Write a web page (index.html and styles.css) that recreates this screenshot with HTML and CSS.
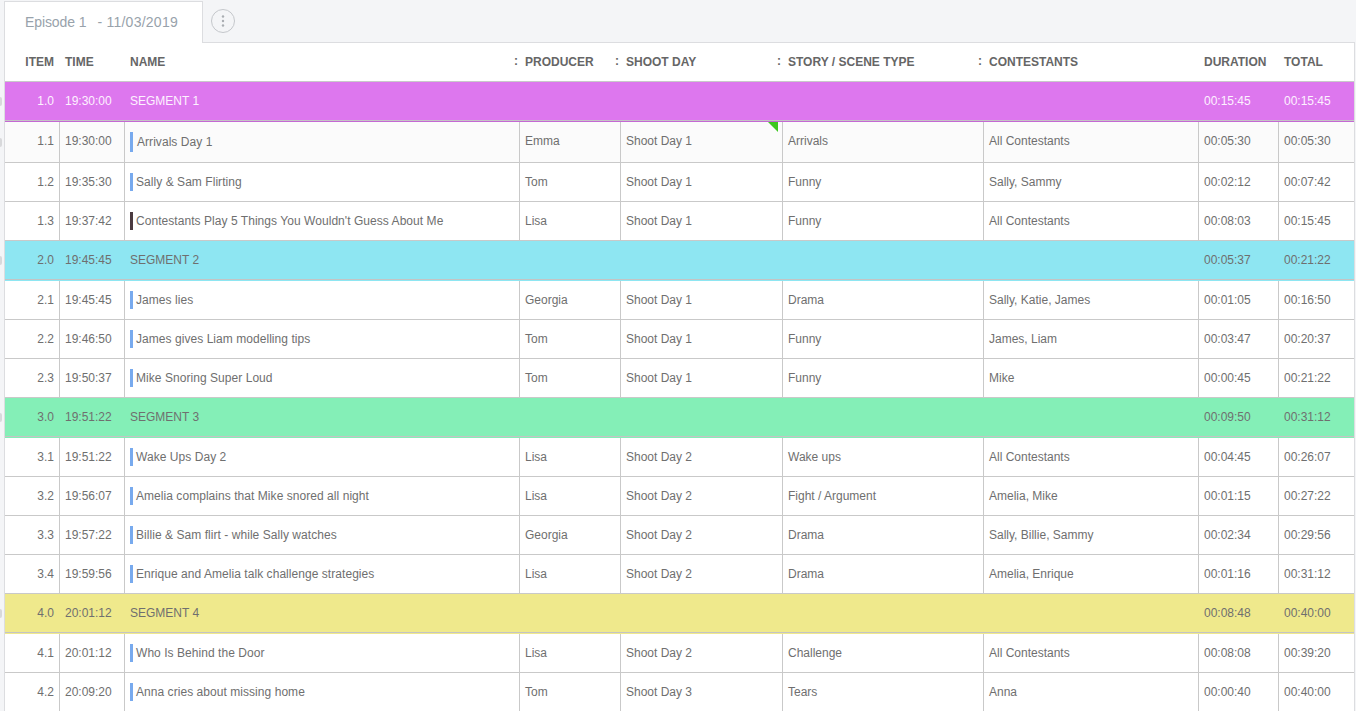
FILE: index.html
```html
<!DOCTYPE html>
<html lang="en">
<head>
<meta charset="utf-8">
<title>Episode 1 rundown</title>
<link rel="stylesheet" href="styles.css">
</head>
<body>
<div class="page">
  <div class="tabs">
    <div class="tab"><span class="ep">Episode 1</span><span class="date">- 11/03/2019</span></div>
    <button class="more" aria-label="More"><svg width="24" height="24" viewBox="0 0 24 24"><circle cx="12" cy="12" r="11.5" fill="none" stroke="#c4c7cb"/><circle cx="12" cy="7.5" r="1.2" fill="#a9adb2"/><circle cx="12" cy="12" r="1.2" fill="#a9adb2"/><circle cx="12" cy="16.5" r="1.2" fill="#a9adb2"/></svg></button>
  </div>
  <div class="sheet">
    <div class="row head">
      <div class="c item">ITEM</div><div class="c time">TIME</div>
      <div class="c name">NAME</div>
      <div class="c prod"><i class="grip">:</i>PRODUCER</div>
      <div class="c day"><i class="grip">:</i>SHOOT DAY</div>
      <div class="c story"><i class="grip">:</i>STORY / SCENE TYPE</div>
      <div class="c cont"><i class="grip">:</i>CONTESTANTS</div>
      <div class="c dur">DURATION</div><div class="c tot">TOTAL</div>
    </div>
    <div class="row seg s1"><i class="handle"></i><div class="c item">1.0</div><div class="c time">19:30:00</div><div class="c title">SEGMENT 1</div><div class="c dur">00:15:45</div><div class="c tot">00:15:45</div></div>
    <div class="row shot first"><i class="handle"></i><div class="c item">1.1</div><div class="c time">19:30:00</div><div class="c name"><b class="mark"></b><span class="gapped">Arrivals Day 1</span></div><div class="c prod">Emma</div><div class="c day">Shoot Day 1<em class="flag"></em></div><div class="c story">Arrivals</div><div class="c cont">All Contestants</div><div class="c dur">00:05:30</div><div class="c tot">00:05:30</div></div>
    <div class="row shot"><div class="c item">1.2</div><div class="c time">19:35:30</div><div class="c name"><b class="mark"></b>Sally &amp; Sam Flirting</div><div class="c prod">Tom</div><div class="c day">Shoot Day 1</div><div class="c story">Funny</div><div class="c cont">Sally, Sammy</div><div class="c dur">00:02:12</div><div class="c tot">00:07:42</div></div>
    <div class="row shot"><div class="c item">1.3</div><div class="c time">19:37:42</div><div class="c name"><b class="mark dark"></b>Contestants Play 5 Things You Wouldn't Guess About Me</div><div class="c prod">Lisa</div><div class="c day">Shoot Day 1</div><div class="c story">Funny</div><div class="c cont">All Contestants</div><div class="c dur">00:08:03</div><div class="c tot">00:15:45</div></div>
    <div class="row seg s2"><i class="handle"></i><div class="c item">2.0</div><div class="c time">19:45:45</div><div class="c title">SEGMENT 2</div><div class="c dur">00:05:37</div><div class="c tot">00:21:22</div></div>
    <div class="row shot"><div class="c item">2.1</div><div class="c time">19:45:45</div><div class="c name"><b class="mark"></b>James lies</div><div class="c prod">Georgia</div><div class="c day">Shoot Day 1</div><div class="c story">Drama</div><div class="c cont">Sally, Katie, James</div><div class="c dur">00:01:05</div><div class="c tot">00:16:50</div></div>
    <div class="row shot"><div class="c item">2.2</div><div class="c time">19:46:50</div><div class="c name"><b class="mark"></b>James gives Liam modelling tips</div><div class="c prod">Tom</div><div class="c day">Shoot Day 1</div><div class="c story">Funny</div><div class="c cont">James, Liam</div><div class="c dur">00:03:47</div><div class="c tot">00:20:37</div></div>
    <div class="row shot"><div class="c item">2.3</div><div class="c time">19:50:37</div><div class="c name"><b class="mark"></b>Mike Snoring Super Loud</div><div class="c prod">Tom</div><div class="c day">Shoot Day 1</div><div class="c story">Funny</div><div class="c cont">Mike</div><div class="c dur">00:00:45</div><div class="c tot">00:21:22</div></div>
    <div class="row seg s3"><i class="handle"></i><div class="c item">3.0</div><div class="c time">19:51:22</div><div class="c title">SEGMENT 3</div><div class="c dur">00:09:50</div><div class="c tot">00:31:12</div></div>
    <div class="row shot"><div class="c item">3.1</div><div class="c time">19:51:22</div><div class="c name"><b class="mark"></b>Wake Ups Day 2</div><div class="c prod">Lisa</div><div class="c day">Shoot Day 2</div><div class="c story">Wake ups</div><div class="c cont">All Contestants</div><div class="c dur">00:04:45</div><div class="c tot">00:26:07</div></div>
    <div class="row shot"><div class="c item">3.2</div><div class="c time">19:56:07</div><div class="c name"><b class="mark"></b>Amelia complains that Mike snored all night</div><div class="c prod">Lisa</div><div class="c day">Shoot Day 2</div><div class="c story">Fight / Argument</div><div class="c cont">Amelia, Mike</div><div class="c dur">00:01:15</div><div class="c tot">00:27:22</div></div>
    <div class="row shot"><div class="c item">3.3</div><div class="c time">19:57:22</div><div class="c name"><b class="mark"></b>Billie &amp; Sam flirt - while Sally watches</div><div class="c prod">Georgia</div><div class="c day">Shoot Day 2</div><div class="c story">Drama</div><div class="c cont">Sally, Billie, Sammy</div><div class="c dur">00:02:34</div><div class="c tot">00:29:56</div></div>
    <div class="row shot"><div class="c item">3.4</div><div class="c time">19:59:56</div><div class="c name"><b class="mark"></b>Enrique and Amelia talk challenge strategies</div><div class="c prod">Lisa</div><div class="c day">Shoot Day 2</div><div class="c story">Drama</div><div class="c cont">Amelia, Enrique</div><div class="c dur">00:01:16</div><div class="c tot">00:31:12</div></div>
    <div class="row seg s4"><i class="handle"></i><div class="c item">4.0</div><div class="c time">20:01:12</div><div class="c title">SEGMENT 4</div><div class="c dur">00:08:48</div><div class="c tot">00:40:00</div></div>
    <div class="row shot"><div class="c item">4.1</div><div class="c time">20:01:12</div><div class="c name"><b class="mark"></b>Who Is Behind the Door</div><div class="c prod">Lisa</div><div class="c day">Shoot Day 2</div><div class="c story">Challenge</div><div class="c cont">All Contestants</div><div class="c dur">00:08:08</div><div class="c tot">00:39:20</div></div>
    <div class="row shot"><div class="c item">4.2</div><div class="c time">20:09:20</div><div class="c name"><b class="mark"></b>Anna cries about missing home</div><div class="c prod">Tom</div><div class="c day">Shoot Day 3</div><div class="c story">Tears</div><div class="c cont">Anna</div><div class="c dur">00:00:40</div><div class="c tot">00:40:00</div></div>
  </div>
</div>
</body>
</html>
```
FILE: styles.css
```css
* { box-sizing: border-box; }
html, body { margin: 0; height: 100%; overflow: hidden; }
body { background: #f4f5f7; font-family: "Liberation Sans", Arial, sans-serif; font-size: 12px; color: #6f6f6f; }
.page { padding: 1px 1px 0 4px; height: 711px; overflow: hidden; }
.tabs { display: flex; align-items: center; height: 42px; margin-bottom: -1px; position: relative; z-index: 1; }
.tab { width: 199px; height: 42px; padding: 0 0 2px 20px; display: flex; align-items: center; background: #fff; border: 1px solid #dcdde0; border-bottom: 0; font-size: 14px; color: #98a2ab; }
.ep { margin-right: 11px; letter-spacing: -0.1px; }
.date { letter-spacing: 0.25px; }
.more { margin: 0 0 2px 8px; padding: 0; width: 24px; height: 24px; border: 0; background: none; display: block; }
.more svg { display: block; }
.sheet { background: #fff; border-top: 1px solid #dcdde0; border-left: 1px solid #dcdde0; border-right: 1px solid #dcdde0; }
.row { display: grid; grid-template-columns: 54px 65px 395px 101px 162px 201px 215px 80px 76px; align-items: stretch; border-bottom: 1px solid #c9c9c9; position: relative; }
.handle { position: absolute; left: -5px; top: 15px; width: 2px; height: 9px; background: #d8d9db; border-radius: 0 2px 2px 0; }
.c { display: flex; align-items: center; padding-left: 6px; white-space: nowrap; min-width: 0; position: relative; }
.c.item { justify-content: flex-end; padding: 0 5px 0 0; }
.head { height: 39px; font-weight: 700; color: #666; }
.grip { font-style: normal; position: absolute; left: -5px; top: 11px; color: #666; }
.seg { --line: var(--tint); height: 40px; border-bottom: 0; background: linear-gradient(to top, var(--line) 1px, #c4c4c4 1px, #c4c4c4 2px, var(--tint) 2px); }
.seg .title { grid-column: 3 / 8; }
.seg .c { padding-bottom: 3px; }
.seg .c.item { padding-bottom: 3px; }
.s1 { --tint: #dd77ee; --line: #c468d4; color: #fdf2ff; }
.s2 { --tint: #8ee6f2; }
.s3 { --tint: #84efb7; }
.s4 { --tint: #efe98c; }
.shot { height: 39px; }
.shot.first { background: #fbfbfb; height: 41px; }
.first .handle { top: 16px; }
.shot.first .c { padding-bottom: 2px; }
.shot.first .c.name { padding-bottom: 0; }
.shot .c + .c { border-left: 1px solid #c9c9c9; padding-left: 5px; }
.name { gap: 3px; }
.shot .name { letter-spacing: 0.05px; }
.mark { width: 3px; height: 18px; background: #78aaee; flex: none; }
.first .mark { height: 20px; }
.mark.dark { background: #4a3a40; }
.gapped { margin-left: 1px; }
.flag { position: absolute; right: 4px; top: 0; width: 0; height: 0; border-top: 10px solid #3cc81e; border-left: 10px solid transparent; }
```
